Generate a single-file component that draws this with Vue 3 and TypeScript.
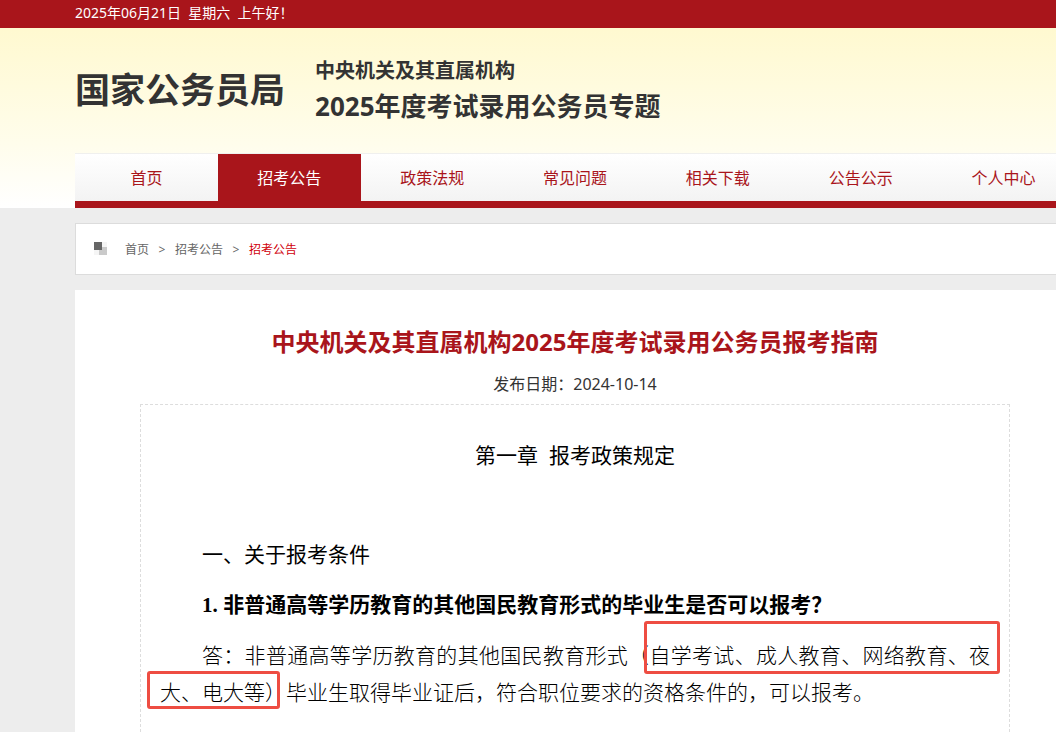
<script setup lang="ts">
interface NavItem {
  label: string
  active?: boolean
}

const navItems: NavItem[] = [
  { label: '首页' },
  { label: '招考公告', active: true },
  { label: '政策法规' },
  { label: '常见问题' },
  { label: '相关下载' },
  { label: '公告公示' },
  { label: '个人中心' },
]

const crumbs: string[] = ['首页', '招考公告', '招考公告']
</script>

<template>
  <div class="page">
    <div class="topbar">
      <div class="wrap">2025年06月21日&nbsp; 星期六&nbsp; 上午好！</div>
    </div>

    <header class="header">
      <div class="wrap">
        <div class="brand">
          <div class="logo">国家公务员局</div>
          <div class="topic">
            <div class="topic-small">中央机关及其直属机构</div>
            <div class="topic-large">2025年度考试录用公务员专题</div>
          </div>
        </div>
        <nav class="nav">
          <a
            v-for="item in navItems"
            :key="item.label"
            href="#"
            class="nav-item"
            :class="{ active: item.active }"
          >{{ item.label }}</a>
        </nav>
      </div>
    </header>

    <main class="wrap main">
      <nav class="crumbs">
        <svg class="crumb-icon" width="13" height="13" viewBox="0 0 13 13" shape-rendering="crispEdges" aria-hidden="true">
          <rect width="13" height="13" fill="#f5f5f5" />
          <rect x="5" y="5" width="8" height="8" fill="#cacaca" />
          <rect width="8" height="8" fill="#666" />
        </svg>
        <template v-for="(crumb, i) in crumbs" :key="i">
          <span v-if="i > 0" class="sep">&gt;</span>
          <a href="#" :class="{ current: i === crumbs.length - 1 }">{{ crumb }}</a>
        </template>
      </nav>

      <article class="article">
        <h1>中央机关及其直属机构2025年度考试录用公务员报考指南</h1>
        <div class="date">发布日期：2024-10-14</div>
        <div class="content">
          <h2>第一章&nbsp; 报考政策规定</h2>
          <h3>一、关于报考条件</h3>
          <h4><span class="num">1.</span> 非普通高等学历教育的其他国民教育形式的毕业生是否可以报考？</h4>
          <div class="answer">
            <p>答：非普通高等学历教育的其他国民教育形式（自学考试、成人教育、网络教育、夜大、电大等）毕业生取得毕业证后，符合职位要求的资格条件的，可以报考。</p>
            <span class="mark mark-first"></span>
            <span class="mark mark-second"></span>
          </div>
        </div>
      </article>
    </main>
  </div>
</template>

<style>
body {
  margin: 0;
  background: #ededed;
}
</style>

<style scoped>
.page {
  height: 100vh;
  overflow: hidden;
  background: #ededed;
  color: #333;
  font-family: "Noto Sans", "Noto Sans CJK SC", sans-serif;
}

a {
  color: inherit;
  text-decoration: none;
}

.wrap {
  margin-left: 75px;
  min-width: 1000px;
}

.topbar {
  padding-bottom: 2px;
  background: #a9151b;
  color: #fff;
  font-size: 14px;
  line-height: 26px;
}

.header {
  background: linear-gradient(#fff9d0, #fffdec 65%, #fff);
}

.brand {
  display: flex;
  gap: 30px;
  height: 125px;
  align-items: center;
  font-weight: 700;
}

.logo {
  padding-bottom: 6px;
  font-size: 35px;
}

.topic-small {
  font-size: 20px;
  line-height: 30px;
}

.topic-large {
  font-size: 26px;
  line-height: 40px;
}

.nav {
  display: flex;
  border-top: 1px solid #f0f0ee;
  border-bottom: 7px solid #a9151b;
  background: linear-gradient(#fff, #f3f3f3);
}

.nav-item {
  flex: 1;
  padding-top: 2px;
  color: #a9151b;
  font-size: 16px;
  line-height: 45px;
  text-align: center;
}

.nav-item.active {
  background: #a9151b;
  color: #fff;
}

.main {
  padding-top: 15px;
}

.crumbs {
  display: flex;
  align-items: center;
  padding: 1px 18px 0;
  border: 1px solid #dcdcdc;
  background: #fff;
  color: #666;
  font-size: 12px;
  line-height: 49px;
}

.crumb-icon {
  margin-right: 18px;
  margin-bottom: 3px;
}

.sep {
  width: 26px;
  text-align: center;
}

.current {
  color: #d0000b;
}

.article {
  min-height: 100vh;
  margin-top: 15px;
  padding: 34px 65px;
  background: #fff;
}

h1,
h2,
h3,
h4,
p {
  margin: 0;
}

h1 {
  color: #a9151b;
  font-size: 24px;
  line-height: 36px;
  text-align: center;
}

.date {
  margin-top: 12px;
  font-size: 16px;
  line-height: 24px;
  text-align: center;
}

.content {
  min-height: 100vh;
  margin-top: 8px;
  padding: 32px 19px;
  border: 1px dashed #ddd;
  color: #000;
  font-size: 21px;
  line-height: 37px;
}

h2,
h3 {
  font-size: 21px;
  font-weight: 400;
}

h2 {
  text-align: center;
}

h3 {
  margin-top: 62px;
  text-indent: 42px;
}

h4 {
  margin-top: 13px;
  font-size: 21px;
  text-indent: 42px;
}

.num {
  font-family: "Liberation Serif", serif;
}

.answer {
  position: relative;
  margin-top: 13px;
}

.answer p {
  font-weight: 300;
  text-align: justify;
  text-indent: 42px;
}

.mark {
  position: absolute;
  box-sizing: border-box;
  border: 3px solid #ee4d42;
  border-radius: 3px;
}

.mark-first {
  top: -16px;
  right: -10px;
  width: 356px;
  height: 53px;
}

.mark-second {
  top: 34px;
  left: -13px;
  width: 133px;
  height: 38px;
}
</style>
